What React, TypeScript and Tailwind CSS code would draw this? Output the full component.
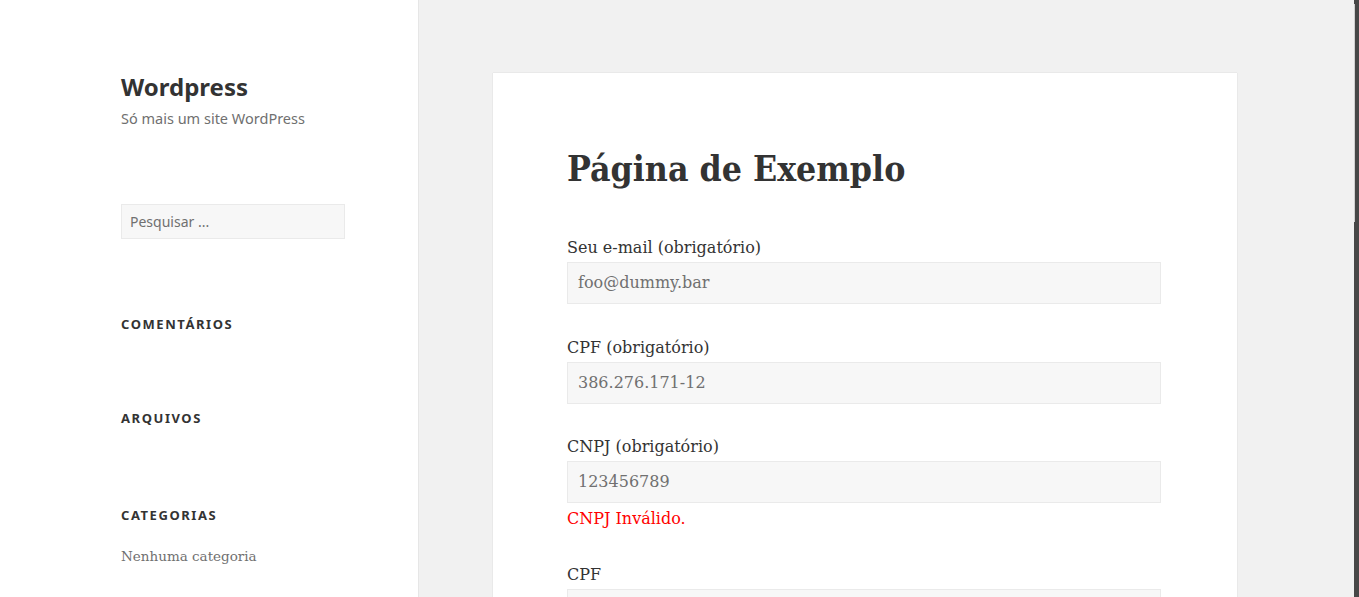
const serif = { fontFamily: '"DejaVu Serif", serif' };

const Field = ({ label, value, error }: { label: string; value?: string; error?: string }) => (
  <div className="mb-[31.5px]">
    <label className="block text-[16px] leading-[24px] text-[#333]">{label}</label>
    <div className="mt-[2px] h-[42px] border border-[#eaeaea] bg-[#f7f7f7] px-[10px] flex items-center text-[16px] text-[#707070]">
      {value}
    </div>
    {error && <p className="mt-[4px] mb-[1px] text-[16px] leading-[24px] text-[#ff0000]">{error}</p>}
  </div>
);

const Sidebar = () => (
  <aside
    className="w-[418px] shrink-0 bg-white shadow-[0_0_1px_rgba(0,0,0,0.25)] pl-[121px] pt-[71px]"
    style={{ fontFamily: '"Noto Sans", sans-serif' }}
  >
    {/* Site branding */}
    <h1 className="text-[24px] font-bold leading-[32px] text-[#333]">Wordpress</h1>
    <p className="text-[14.5px] leading-[22px] text-[#707070] mt-[4px]">Só mais um site WordPress</p>

    {/* Search */}
    <div className="mt-[75px] w-[224px] h-[35px] border border-[#eaeaea] bg-[#f7f7f7] px-[8px] flex items-center text-[14px] text-[#707070]">
      Pesquisar ...
    </div>

    {/* Widgets */}
    <h2 className="mt-[76px] text-[13px] font-bold tracking-[0.12em] leading-[18px] text-[#333]">COMENTÁRIOS</h2>
    <h2 className="mt-[76px] text-[13px] font-bold tracking-[0.12em] leading-[18px] text-[#333]">ARQUIVOS</h2>
    <h2 className="mt-[79px] text-[13px] font-bold tracking-[0.12em] leading-[18px] text-[#333]">CATEGORIAS</h2>
    <p className="mt-[20px] text-[13.5px] leading-[24px] text-[#707070]" style={serif}>
      Nenhuma categoria
    </p>
  </aside>
);

const App = () => {
  return (
    <div className="flex h-[597px] w-full overflow-hidden bg-[#f1f1f1]">
      <Sidebar />

      <main className="flex-1 min-w-0">
        <article
          className="ml-[75px] mt-[73px] w-[744px] bg-white shadow-[0_0_1px_rgba(0,0,0,0.2)] pl-[74px] pr-[76px] pt-[72px] pb-[60px]"
          style={serif}
        >
          <h1
            className="text-[35.3px] font-bold leading-[47px] text-[#333] mb-[44px]"
            style={{ fontFamily: '"DejaVu Serif Condensed", "DejaVu Serif", serif' }}
          >
            Página de Exemplo
          </h1>

          <Field label="Seu e-mail (obrigatório)" value="foo@dummy.bar" />
          <Field label="CPF (obrigatório)" value="386.276.171-12" />
          <Field label="CNPJ (obrigatório)" value="123456789" error="CNPJ Inválido." />
          <Field label="CPF" value="" />
        </article>
      </main>

      {/* window edge / scrollbar */}
      <div className="w-[5px] shrink-0 bg-[#474747] pt-[4px]">
        <div className="w-[1px] h-[218px] bg-[#d0d0d0]" />
      </div>
    </div>
  );
};

export default App;
